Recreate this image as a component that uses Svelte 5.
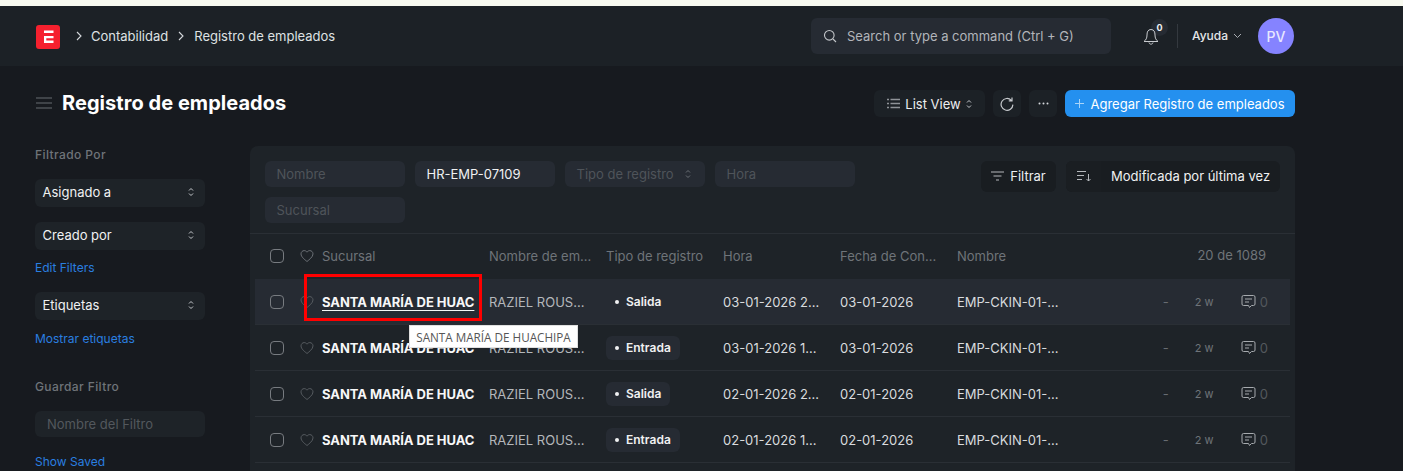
<script>
  const rows = [
    { hora: '03-01-2026 2…', fecha: '03-01-2026', tipo: 'Salida', active: true },
    { hora: '03-01-2026 1…', fecha: '03-01-2026', tipo: 'Entrada' },
    { hora: '02-01-2026 2…', fecha: '02-01-2026', tipo: 'Salida' },
    { hora: '02-01-2026 1…', fecha: '02-01-2026', tipo: 'Entrada' }
  ];
  const heart = 'M7 12.500C5 10.800 1 8 1 4.900 1 3 2.500 1.600 4.200 1.600 5.400 1.600 6.400 2.200 7 3.200 7.600 2.200 8.600 1.600 9.800 1.600 11.500 1.600 13 3 13 4.900 13 8 9 10.800 7 12.500Z';
</script>

<div class="strip"></div>
<header class="nav">
  <div class="crumbs">
    <svg class="logo" width="24" height="24" viewBox="0 0 24 24"><rect width="24" height="24" rx="3" fill="#f5202e"/><path d="M8 5.500h9.500v2.600H8zM8 11h9.500v2.300H10.300v2.200h7.200v2.600H8z" fill="#fff"/></svg>
    <svg class="chev first" width="8" height="10" viewBox="0 0 8 10"><path d="M2 1l4 4-4 4" fill="none" stroke="#d5d8dc" stroke-width="1.100"/></svg>
    <span>Contabilidad</span>
    <svg class="chev" width="8" height="10" viewBox="0 0 8 10"><path d="M2 1l4 4-4 4" fill="none" stroke="#d5d8dc" stroke-width="1.100"/></svg>
    <span>Registro de empleados</span>
  </div>
  <div class="nav-right">
    <div class="search">
      <svg width="14" height="14" viewBox="0 0 14 14"><circle cx="6.300" cy="6.300" r="4.800" fill="none" stroke="#c4c7cb" stroke-width="1.100"/><path d="M10 10l3 3" stroke="#c4c7cb" stroke-width="1.100"/></svg>
      <span>Search or type a command (Ctrl + G)</span>
    </div>
    <div class="bell">
      <svg width="18" height="20" viewBox="0 0 18 20"><path d="M9 2.500C5.800 2.500 5 5 5 8c0 3-1 5-3 6.500h14C14 13 13 11 13 8c0-3-.8-5.500-4-5.500ZM7 15.500c.3 2.200 3.700 2.200 4 0" fill="none" stroke="#c9ccd0" stroke-width="1"/></svg>
      <b>0</b>
    </div>
    <div class="divider"></div>
    <div class="help">Ayuda
      <svg width="9" height="6" viewBox="0 0 9 6"><path d="M1 1l3.500 3.500L8 1" fill="none" stroke="#a8acb1"/></svg>
    </div>
    <div class="avatar">PV</div>
  </div>
</header>

<main class="page">
  <div class="head">
    <div class="title">
      <svg width="16" height="12" viewBox="0 0 16 12"><path d="M0 1h16M0 6h16M0 11h16" stroke="#4d5257" stroke-width="1.300"/></svg>
      <h1>Registro de empleados</h1>
    </div>
    <div class="actions">
      <button class="btn view">
        <svg width="13" height="11" viewBox="0 0 13 11"><path d="M0 1.500h2M0 5.500h2M0 9.500h2M3.500 1.500H13M3.500 5.500H13M3.500 9.500H13" stroke="#8f9398" stroke-width="1.300"/></svg>
        List View
        <svg width="6" height="10" viewBox="0 0 6 10"><path d="M1 3.500 3 1.500l2 2M1 6.500l2 2 2-2" fill="none" stroke="#c7cace"/></svg>
      </button>
      <button class="btn icon">
        <svg width="14" height="14" viewBox="0 0 14 14"><path d="M11.300 3.300A5.900 5.900 0 1 0 12.900 7.600M12 .6v3.200H8.800" fill="none" stroke="#c7cace" stroke-width="1.200"/></svg>
      </button>
      <button class="btn icon">
        <svg width="11" height="3" viewBox="0 0 11 3"><circle cx="1.500" cy="1.500" r="1" fill="#d5d8dc"/><circle cx="5.500" cy="1.500" r="1" fill="#d5d8dc"/><circle cx="9.500" cy="1.500" r="1" fill="#d5d8dc"/></svg>
      </button>
      <button class="btn primary">
        <svg width="9" height="9" viewBox="0 0 9 9"><path d="M4.500 0v9M0 4.500h9" stroke="#a9d4f8"/></svg>
        Agregar Registro de empleados
      </button>
    </div>
  </div>

  <div class="layout">
    <aside class="side">
      <div class="label">Filtrado Por</div>
      <div class="sel first-sel">Asignado a
        <svg width="6" height="10" viewBox="0 0 6 10"><path d="M1 3.500 3 1.500l2 2M1 6.500l2 2 2-2" fill="none" stroke="#c7cace"/></svg>
      </div>
      <div class="sel second-sel">Creado por
        <svg width="6" height="10" viewBox="0 0 6 10"><path d="M1 3.500 3 1.500l2 2M1 6.500l2 2 2-2" fill="none" stroke="#c7cace"/></svg>
      </div>
      <div class="link edit">Edit Filters</div>
      <div class="sel tags">Etiquetas
        <svg width="6" height="10" viewBox="0 0 6 10"><path d="M1 3.500 3 1.500l2 2M1 6.500l2 2 2-2" fill="none" stroke="#c7cace"/></svg>
      </div>
      <div class="link show-tags">Mostrar etiquetas</div>
      <div class="label save">Guardar Filtro</div>
      <div class="filter-input">Nombre del Filtro</div>
      <div class="link saved">Show Saved</div>
    </aside>

    <section class="card">
      <div class="filters">
        <div class="fields">
          <div class="field ph">Nombre</div>
          <div class="field">HR-EMP-07109</div>
          <div class="field ph between">Tipo de registro
            <svg width="6" height="10" viewBox="0 0 6 10"><path d="M1 3.500 3 1.500l2 2M1 6.500l2 2 2-2" fill="none" stroke="#6b7076"/></svg>
          </div>
          <div class="field ph">Hora</div>
          <div class="field ph">Sucursal</div>
        </div>
        <div class="filter-actions">
          <button class="btn filt">
            <svg width="13" height="10" viewBox="0 0 13 10"><path d="M0 1h13M2.500 5h8M5 9h3" stroke="#b5b8bc" stroke-width="1.200"/></svg>
            Filtrar
          </button>
          <div class="sort">
            <span class="sort-ic">
              <svg width="14" height="12" viewBox="0 0 14 12"><path d="M0 1.500h9M0 5.500h7M0 9.500h5M11.500 4v7M9.500 9l2 2 2-2" fill="none" stroke="#b5b8bc"/></svg>
            </span>
            <span class="sort-text">Modificada por última vez</span>
          </div>
        </div>
      </div>

      <div class="row header">
        <span class="check"></span>
        <svg class="heart" width="14" height="14" viewBox="0 0 14 14"><path d={heart} fill="none" stroke="#6b7076"/></svg>
        <span class="c-sub">Sucursal</span>
        <span class="c-emp">Nombre de em...</span>
        <span class="c-tipo">Tipo de registro</span>
        <span class="c-hora">Hora</span>
        <span class="c-fecha">Fecha de Con...</span>
        <span class="c-name">Nombre</span>
        <span class="count">20 de 1089</span>
      </div>

      {#each rows as r, i}
        <div class="row data" class:active={r.active}>
          <span class="check"></span>
          <svg class="heart" width="14" height="14" viewBox="0 0 14 14"><path d={heart} fill="none" stroke="#565b60"/></svg>
          <span class="c-sub subject" class:under={r.active}>SANTA MARÍA DE HUAC</span>
          <span class="c-emp">RAZIEL ROUS...</span>
          <span class="c-tipo"><span class="pill" class:plain={r.active}><i></i>{r.tipo}</span></span>
          <span class="c-hora">{r.hora}</span>
          <span class="c-fecha">{r.fecha}</span>
          <span class="c-name">EMP-CKIN-01-...</span>
          <span class="meta">
            <span class="dash">-</span>
            <span class="ago">2 w</span>
            <svg width="15" height="15" viewBox="0 0 15 15"><path d="M2.500 1.500h10a1.500 1.500 0 0 1 1.500 1.500v7a1.500 1.500 0 0 1-1.500 1.500h-2L8.500 13.500l-1-2h-5A1.500 1.500 0 0 1 1 10V3a1.500 1.500 0 0 1 1.500-1.500ZM4 5h7M4 8h4" fill="none" stroke="#a6aaae"/></svg>
            <span class="zero">0</span>
          </span>
          {#if r.active}
            <div class="marker"></div>
            <div class="tip">SANTA MARÍA DE HUACHIPA</div>
          {/if}
        </div>
      {/each}
    </section>
  </div>
</main>

<style>
  :global(html), :global(body) { margin: 0; height: 471px; overflow: hidden; background: #171a1f; }
  * { box-sizing: border-box; }
  :global(#app) { font-family: Inter, "Liberation Sans", sans-serif; font-size: 13px; color: #f0f1f2; }
  .strip { height: 6px; background: #f8faf0; }
  .nav { height: 60px; background: #1c2126; display: flex; align-items: center; justify-content: space-between; padding: 0 109px 0 36px; }
  .crumbs { display: flex; align-items: center; color: #dfe1e3; }
  .logo { margin: 2px 15px 0 0; }
  .chev { margin-right: 9px; margin-left: 9px; }
  .chev.first { margin-left: 0; margin-right: 8px; }
  .nav-right { display: flex; align-items: center; }
  .search { width: 300px; height: 36px; margin-right: 31px; border-radius: 6px; background: #262b33; display: flex; align-items: center; gap: 10px; padding-left: 12px; color: #b2b5ba; }
  .bell { width: 26px; height: 36px; position: relative; display: flex; align-items: center; }
  .bell b { position: absolute; left: 9px; top: 1px; width: 17px; height: 17px; border-radius: 50%; background: #262b33; font-size: 9px; display: flex; align-items: center; justify-content: center; z-index: 2; }
  .bell svg { position: relative; top: 1px; z-index: 3; }
  .divider { width: 1px; height: 24px; background: #34393f; margin: 0 14px 0 9px; }
  .help { display: flex; align-items: center; gap: 5px; width: 66px; margin-bottom: 1px; font-size: 12px; font-weight: 500; color: #e4e6e8; }
  .avatar { width: 36px; height: 36px; border-radius: 50%; background: #8583ff; color: #e8e8ff; display: flex; align-items: center; justify-content: center; font-size: 14px; font-weight: 500; }

  .head { height: 80px; padding: 0 108px 5px 36px; display: flex; align-items: center; justify-content: space-between; }
  .title { display: flex; align-items: center; gap: 10px; margin-bottom: 2px; }
  h1 { margin: 0; font-size: 20px; line-height: 28px; font-weight: 700; color: #fff; letter-spacing: 0.05px; }
  .actions { display: flex; gap: 8px; align-items: center; }
  .btn { height: 27.500px; border: 0; border-radius: 6px; background: #1c2126; color: #eceef0; font: inherit; display: flex; align-items: center; justify-content: center; padding: 0; }
  .view { width: 111px; gap: 5px; }
  .icon { width: 28px; }
  .primary { width: 230px; gap: 6px; background: #2490ef; color: #fff; }

  .layout { display: flex; align-items: flex-start; padding-left: 35px; }
  .side { width: 170px; margin-right: 45px; display: flex; flex-direction: column; }
  .label { font-size: 12px; line-height: 18px; font-weight: 500; color: #6f7479; letter-spacing: 0.4px; }
  .sel { height: 27.500px; padding: 0 11px 1px 7.500px; border-radius: 6px; background: #1e2328; color: #f0f1f2; display: flex; align-items: center; justify-content: space-between; }
  .first-sel { margin-top: 15px; }
  .second-sel { margin-top: 15.500px; }
  .link { color: #2a7fe0; font-size: 12px; line-height: 16px; }
  .edit { margin-top: 10.500px; }
  .tags { margin-top: 16px; }
  .show-tags { margin-top: 11.500px; }
  .save { margin-top: 31px; }
  .filter-input { height: 26px; margin-top: 15px; border-radius: 6px; background: #1e2328; color: #53585d; padding-left: 12px; display: flex; align-items: center; }
  .saved { margin-top: 17px; }

  .card { width: 1045px; background: #1e2328; border-radius: 8px 8px 0 0; height: 400px; }
  .filters { height: 88px; padding: 15px 15px 0; display: flex; justify-content: space-between; border-bottom: 1px solid #2a2f35; }
  .fields { width: 600px; display: flex; flex-wrap: wrap; gap: 10px; align-content: flex-start; }
  .field { width: 140px; height: 26px; border-radius: 6px; background: #262b33; padding: 0 12px 0 11.500px; display: flex; align-items: center; color: #f0f1f2; }
  .ph { color: #4f545a; }
  .between { justify-content: space-between; padding-right: 14px; }
  .filter-actions { display: flex; gap: 10px; }
  .filt { width: 75px; height: 31px; gap: 6px; background: #191d21; padding-bottom: 1px; }
  .sort { width: 214px; height: 31px; border-radius: 6px; background: #191d21; display: flex; align-items: center; padding-bottom: 1px; }
  .sort-ic { width: 35px; height: 31px; display: flex; align-items: center; justify-content: center; background: #1a1e22; border-radius: 6px 0 0 6px; padding-left: 1px; }
  .sort-text { margin-left: 10px; white-space: nowrap; }

  .row { height: 46px; margin: 0 5px; padding-left: 15px; display: grid; grid-template-columns: 30px 22px 167px 117px 117px 117px 117px 1fr; align-items: center; position: relative; }
  .row > svg.heart { display: block; }
  .header { height: 45px; color: #6f7479; padding-bottom: 1px; }
  .data { border-bottom: 1px solid #2a2f35; color: #d9dbde; }
  .active { background: #262b33; }
  .check { width: 14px; height: 14px; border: 1px solid #777b80; border-radius: 4px; display: block; }
  .subject { font-weight: 700; color: #f7f7f8; white-space: nowrap; letter-spacing: -0.04px; }
  .under { text-decoration: underline; text-underline-offset: 3px; }
  .c-emp, .c-hora, .c-fecha, .c-name { white-space: nowrap; }
  .c-emp { color: #b4b7bb; }
  .header .c-emp { color: #6f7479; }
  .count { position: absolute; right: 24px; top: 13px; }
  .pill { display: inline-flex; align-items: center; gap: 7px; height: 24px; padding: 0 9px; border-radius: 6px; background: #262b33; font-size: 12px; font-weight: 600; color: #f0f1f2; }
  .pill i { width: 4px; height: 4px; border-radius: 50%; background: #f0f1f2; }
  .plain { background: transparent; }
  .meta { position: absolute; right: 22px; top: 0; height: 100%; display: flex; align-items: center; color: #676c72; }
  .dash { width: 32px; }
  .ago { width: 46px; font-size: 11px; color: #6f7479; }
  .meta svg { margin-right: 4px; }
  .zero { color: #53585d; }
  .marker { position: absolute; left: 49px; top: -5px; width: 178px; height: 47px; border: 3px solid #ff0000; pointer-events: none; }
  .tip { position: absolute; left: 154px; top: 46px; width: 169px; height: 23px; background: #fff; border: 1px solid #e0e0e0; color: #555; font-family: "Open Sans", sans-serif; font-size: 11.700px; display: flex; align-items: center; justify-content: center; white-space: nowrap; z-index: 3; }
</style>
